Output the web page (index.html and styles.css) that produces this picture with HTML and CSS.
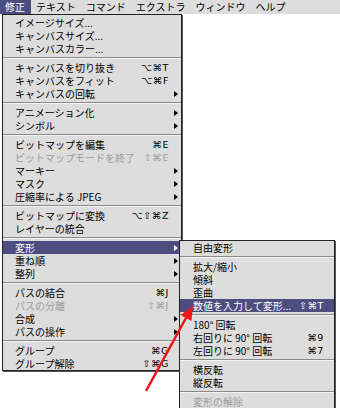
FILE: index.html
```html
<!DOCTYPE html>
<html>
<head>
<meta charset="utf-8">
<title>修正メニュー</title>
<link rel="stylesheet" href="styles.css">
</head>
<body>
<div class="screen">
  <div class="menubar">
    <span class="title active">修正</span>
    <span class="title">テキスト</span>
    <span class="title">コマンド</span>
    <span class="title">エクストラ</span>
    <span class="title">ウィンドウ</span>
    <span class="title">ヘルプ</span>
  </div>

  <!-- 修正 menu -->
  <div class="menu main">
    <div class="item"><span class="label">イメージサイズ...</span></div>
    <div class="item"><span class="label">キャンバスサイズ...</span></div>
    <div class="item"><span class="label">キャンバスカラー...</span></div>
    <div class="sep"></div>
    <div class="item"><span class="label">キャンバスを切り抜き</span><span class="key">⌥⌘T</span></div>
    <div class="item"><span class="label">キャンバスをフィット</span><span class="key">⌥⌘F</span></div>
    <div class="item sub"><span class="label">キャンバスの回転</span></div>
    <div class="sep"></div>
    <div class="item sub"><span class="label">アニメーション化</span></div>
    <div class="item sub"><span class="label">シンボル</span></div>
    <div class="sep"></div>
    <div class="item"><span class="label">ビットマップを編集</span><span class="key">⌘E</span></div>
    <div class="item off"><span class="label">ビットマップモードを終了</span><span class="key">⇧⌘E</span></div>
    <div class="item sub"><span class="label">マーキー</span></div>
    <div class="item sub"><span class="label">マスク</span></div>
    <div class="item sub"><span class="label">圧縮率による JPEG</span></div>
    <div class="sep"></div>
    <div class="item"><span class="label">ビットマップに変換</span><span class="key">⌥⇧⌘Z</span></div>
    <div class="item"><span class="label">レイヤーの統合</span></div>
    <div class="sep"></div>
    <div class="item sub hot"><span class="label">変形</span></div>
    <div class="item sub"><span class="label">重ね順</span></div>
    <div class="item sub"><span class="label">整列</span></div>
    <div class="sep"></div>
    <div class="item"><span class="label">パスの結合</span><span class="key">⌘J</span></div>
    <div class="item off"><span class="label">パスの分離</span><span class="key">⇧⌘J</span></div>
    <div class="item sub"><span class="label">合成</span></div>
    <div class="item sub"><span class="label">パスの操作</span></div>
    <div class="sep"></div>
    <div class="item"><span class="label">グループ</span><span class="key">⌘G</span></div>
    <div class="item"><span class="label">グループ解除</span><span class="key">⇧⌘G</span></div>
  </div>

  <!-- 変形 submenu -->
  <div class="menu submenu">
    <div class="item"><span class="label">自由変形</span></div>
    <div class="sep"></div>
    <div class="item"><span class="label">拡大/縮小</span></div>
    <div class="item"><span class="label">傾斜</span></div>
    <div class="item"><span class="label">歪曲</span></div>
    <div class="item hot"><span class="label">数値を入力して変形...</span><span class="key">⇧⌘T</span></div>
    <div class="sep"></div>
    <div class="item"><span class="label">180° 回転</span></div>
    <div class="item"><span class="label">右回りに 90° 回転</span><span class="key">⌘9</span></div>
    <div class="item"><span class="label">左回りに 90° 回転</span><span class="key">⌘7</span></div>
    <div class="sep"></div>
    <div class="item"><span class="label">横反転</span></div>
    <div class="item"><span class="label">縦反転</span></div>
    <div class="sep"></div>
    <div class="item off"><span class="label">変形の解除</span></div>
  </div>

  <svg class="pointer" width="340" height="408" viewBox="0 0 340 408">
    <line x1="146" y1="391" x2="186" y2="318" stroke="#f01414" stroke-width="2.5"/>
    <polygon points="193,306 180.6,315 191.4,321" fill="#f01414"/>
  </svg>
</div>
</body>
</html>
```

FILE: styles.css
```css
*{
  margin:0;
  padding:0;
  box-sizing:border-box;
}
html, body{
  background:#fff;
}
body{
  width:340px;
  height:408px;
  overflow:hidden;
  font-family:"Noto Sans CJK JP","DejaVu Sans",sans-serif;
  font-size:10px;
  color:#000;
}
.screen{
  position:relative;
  width:340px;
  height:408px;
}

/* menu bar */
.menubar{
  display:flex;
  height:14px;
  background:#dddddd;
}
.title{
  padding:0 5px;
  line-height:14px;
  white-space:nowrap;
}
.title.active{
  background:#4d4d80;
  color:#fff;
  width:31px;
}

/* menus */
.menu{
  background:#dddddd;
  border:1px solid #222;
  box-shadow:1px 1px 0 #555;
}
.main{
  width:180px;
  margin-left:2px;
  padding:1px 0 0;
}
.submenu{
  position:absolute;
  left:179px;
  top:240px;
  width:156px;
}
.item{
  display:flex;
  align-items:center;
  height:13px;
  padding:0 12px 0 12px;
  white-space:nowrap;
}
.submenu .item{
  padding:0 10px 0 13px;
}
.label{
  flex:1;
  line-height:13px;
}
.key{
  font-family:"DejaVu Sans",sans-serif;
  font-size:9.5px;
  letter-spacing:0.6px;
  line-height:13px;
}
.off{
  color:#9c9c9c;
}
.hot{
  background:#4d4d80;
  color:#fff;
}
.sub::after{
  content:"";
  margin-left:auto;
  margin-right:-9px;
  border-left:4px solid #000;
  border-top:3px solid transparent;
  border-bottom:3px solid transparent;
}
.hot.sub::after{
  border-left-color:#fff;
}
.sep{
  margin:2px 0;
  border-top:1px solid #8a8a8a;
  border-bottom:1px solid #f4f4f4;
}

/* red callout arrow */
.pointer{
  position:absolute;
  left:0;
  top:0;
  pointer-events:none;
}
```
